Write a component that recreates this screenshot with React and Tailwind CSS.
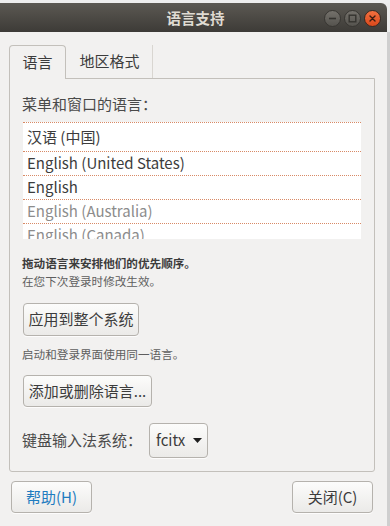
const font = { fontFamily: '"Noto Sans CJK SC", "Noto Sans", sans-serif' };

function WinButton({ kind }) {
  if (kind === "close") {
    return (
      <div className="w-[17px] h-[17px] rounded-full border border-[#3a2a22] bg-gradient-to-b from-[#f4703f] to-[#d9481a] flex items-center justify-center">
        <svg width="9" height="9" viewBox="0 0 9 9">
          <path d="M2 2 L7 7 M7 2 L2 7" stroke="#3a1c10" strokeWidth="1.4" strokeLinecap="round" />
        </svg>
      </div>
    );
  }
  return (
    <div className="w-[17px] h-[17px] rounded-full border border-[#383632] bg-gradient-to-b from-[#74716b] to-[#55534e] flex items-center justify-center">
      <svg width="9" height="9" viewBox="0 0 9 9">
        {kind === "min" ? (
          <path d="M1 4.5 H8" stroke="#35332f" strokeWidth="1.6" />
        ) : (
          <rect x="1.2" y="1.2" width="6.6" height="6.6" fill="none" stroke="#35332f" strokeWidth="1.4" />
        )}
      </svg>
    </div>
  );
}

function Button({ children, className = "" }) {
  return (
    <div
      className={
        "flex items-center justify-center rounded-[4px] border border-[#b5b2ad] bg-gradient-to-b from-[#fcfcfb] to-[#ebeae8] shadow-[0_1px_0_rgba(255,255,255,0.8)] text-[15px] " +
        className
      }
    >
      {children}
    </div>
  );
}

export default function App() {
  const languages = [
    { name: "汉语 (中国)", active: true, h: "h-[29px]" },
    { name: "English (United States)", active: true, h: "h-[24px]" },
    { name: "English", active: true, h: "h-[24px]" },
    { name: "English (Australia)", active: false, h: "h-[24px]" },
    { name: "English (Canada)", active: false, h: "h-[24px]" },
  ];

  return (
    <div className="w-[390px] h-[526px] flex flex-col overflow-hidden bg-[#ececec]" style={font}>
      <div className="h-[3px] bg-[#eeeeee]" />
      <div className="flex flex-1">
        <div className="w-[387px] flex flex-col">
          {/* title bar */}
          <div className="h-[29px] rounded-tr-[6px] bg-gradient-to-b from-[#5c5953] to-[#3d3b37] grid grid-cols-[1fr_auto_1fr] items-center">
            <div />
            <div className="text-[14.5px] font-bold text-[#dfdbd2] pt-[1px] pl-[4px]">语言支持</div>
            <div className="flex justify-end gap-[3px] pr-[6px] pt-[1px]">
              <WinButton kind="min" />
              <WinButton kind="max" />
              <WinButton kind="close" />
            </div>
          </div>

          {/* window body */}
          <div className="flex-1 bg-[#f2f1f0] flex flex-col pt-[13px] text-[#3c3c3c]">
            {/* tabs */}
            <div className="flex h-[33px] pl-[9px]">
              <div className="w-[57px] h-[34px] rounded-t-[4px] border border-b-0 border-[#c3c0bb] bg-[#f2f1f0] flex items-center justify-center text-[15px] z-10">
                语言
              </div>
              <div className="w-[86px] flex items-center justify-center text-[15px] pl-[1px]">
                <span>地区格式</span>
              </div>
              <div className="w-px h-[33px] bg-[#d9d6d1]" />
            </div>

            {/* notebook panel */}
            <div className="ml-[9px] w-[366px] border border-[#c3c0bb] rounded-b-[3px] px-[13px] pt-[15px] pb-[13px] flex flex-col">
              <div className="h-[20px] leading-[20px] text-[15px] text-[#4a4a4a] -ml-[1px]">菜单和窗口的语言：</div>
              <div className="mt-[8px] h-[117px] bg-white overflow-hidden">
                {languages.map((l) => (
                  <div
                    key={l.name}
                    className={
                      l.h +
                      " border-t border-dotted border-[#d88a66] flex items-center pl-[4px] text-[15px] " +
                      (l.active ? "text-[#3c3c3c]" : "text-[#8c8c8c]")
                    }
                  >
                    {l.name}
                  </div>
                ))}
              </div>

              <div className="mt-[15px] h-[18px] leading-[18px] text-[11.6px] font-bold text-[#3c3c3c] -ml-[1px]">
                拖动语言来安排他们的优先顺序。
              </div>
              <div className="h-[18px] leading-[18px] text-[11.6px] text-[#5e5e5e] -ml-[1px]">在您下次登录时修改生效。</div>

              <Button className="mt-[13px] w-[116px] h-[33px]">应用到整个系统</Button>

              <div className="mt-[9px] h-[18px] leading-[18px] text-[11.6px] text-[#5e5e5e] -ml-[1px]">
                启动和登录界面使用同一语言。
              </div>

              <Button className="mt-[12px] w-[129px] h-[32px]">添加或删除语言...</Button>

              <div className="mt-[16px] flex items-center h-[35px]">
                <div className="w-[127px] text-[15px] text-[#4a4a4a] -ml-[1px]">键盘输入法系统：</div>
                <Button className="w-[59px] h-[35px] justify-start pl-[6px] gap-[8px]">
                  <span className="text-[#3c3c3c]">fcitx</span>
                  <svg width="9" height="5" viewBox="0 0 9 5">
                    <path d="M0 0 H9 L4.5 5 Z" fill="#1e1e1e" />
                  </svg>
                </Button>
              </div>
            </div>

            {/* dialog buttons */}
            <div className="mt-[9px] flex justify-between pl-[11px] pr-[14px]">
              <Button className="w-[81px] h-[32px] text-[#1f7cc0]">帮助(H)</Button>
              <Button className="w-[81px] h-[32px]">关闭(C)</Button>
            </div>
          </div>
        </div>
        <div className="flex-1 flex flex-col">
          <div className="h-[29px] bg-[#ececec]" />
          <div className="flex-1 bg-[#cfcfcf]" />
        </div>
      </div>
    </div>
  );
}
